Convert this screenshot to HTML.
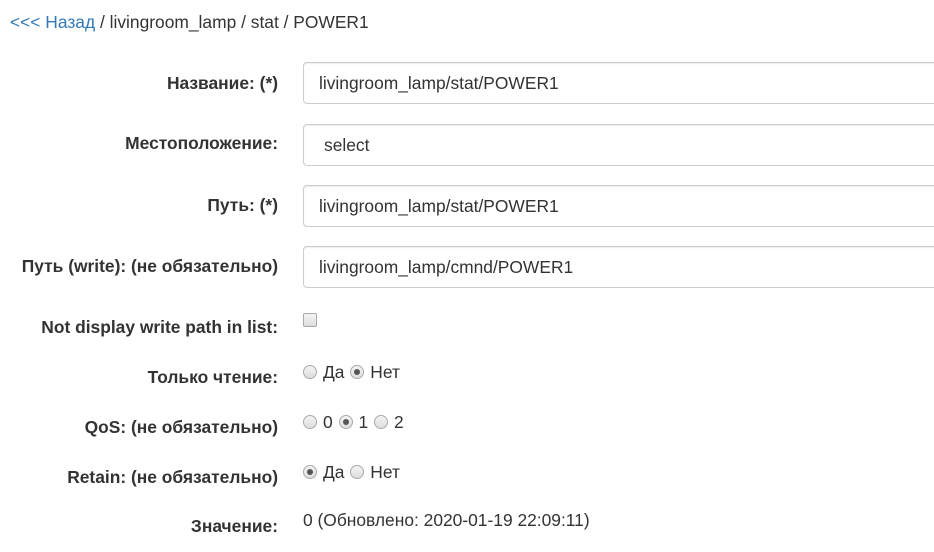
<!DOCTYPE html>
<html><head><meta charset="utf-8"><style>
body{margin:0;background:#fff;font-family:"Liberation Sans",Arial,sans-serif;font-size:17.4px;color:#333;width:934px;height:552px;overflow:hidden;position:relative}
.a{position:absolute;white-space:nowrap}
.bc{left:10px;top:12px}
.bc a{color:#337ab7;text-decoration:none}
.lbl{font-weight:bold;right:656px;text-align:right}
.inp{left:303px;width:700px;height:42px;border:1px solid #ccc;border-radius:4px;box-sizing:border-box;padding:0 0 0 15px;line-height:40px;box-shadow:inset 0 1px 1px rgba(0,0,0,.075)}
.r{display:inline-block;width:12px;height:12px;border:1px solid #aaa;border-radius:50%;background:linear-gradient(#f4f4f4,#ddd);vertical-align:-1px;position:relative;margin-right:6px;margin-left:1px}
.r.on::after{content:"";position:absolute;left:3px;top:3px;width:6px;height:6px;border-radius:50%;background:#555}
.r:first-child{margin-left:0}
.cb{display:inline-block;width:12px;height:12px;border:1px solid #aaa;border-radius:2px;background:linear-gradient(#f4f4f4,#ddd)}
</style></head><body>
<div class="a bc"><a href="#">&lt;&lt;&lt; Назад</a> / livingroom_lamp / stat / POWER1</div>

<div class="a lbl" style="top:73px">Название: (*)</div>
<div class="a inp" style="top:62px">livingroom_lamp/stat/POWER1</div>

<div class="a lbl" style="top:133px">Местоположение:</div>
<div class="a inp" style="top:124px;padding-left:20px">select</div>

<div class="a lbl" style="top:195px">Путь: (*)</div>
<div class="a inp" style="top:185px">livingroom_lamp/stat/POWER1</div>

<div class="a lbl" style="top:256px">Путь (write): (не обязательно)</div>
<div class="a inp" style="top:246px">livingroom_lamp/cmnd/POWER1</div>

<div class="a lbl" style="top:317px">Not display write path in list:</div>
<div class="a" style="left:303px;top:311px"><span class="cb"></span></div>

<div class="a lbl" style="top:367px">Только чтение:</div>
<div class="a" style="left:303px;top:362px"><span class="r"></span>Да <span class="r on"></span>Нет</div>

<div class="a lbl" style="top:417px">QoS: (не обязательно)</div>
<div class="a" style="left:303px;top:412px"><span class="r"></span>0 <span class="r on"></span>1 <span class="r"></span>2</div>

<div class="a lbl" style="top:467px">Retain: (не обязательно)</div>
<div class="a" style="left:303px;top:462px"><span class="r on"></span>Да <span class="r"></span>Нет</div>

<div class="a lbl" style="top:516px">Значение:</div>
<div class="a" style="left:303px;top:510px">0 (Обновлено: 2020-01-19 22:09:11)</div>
</body></html>
